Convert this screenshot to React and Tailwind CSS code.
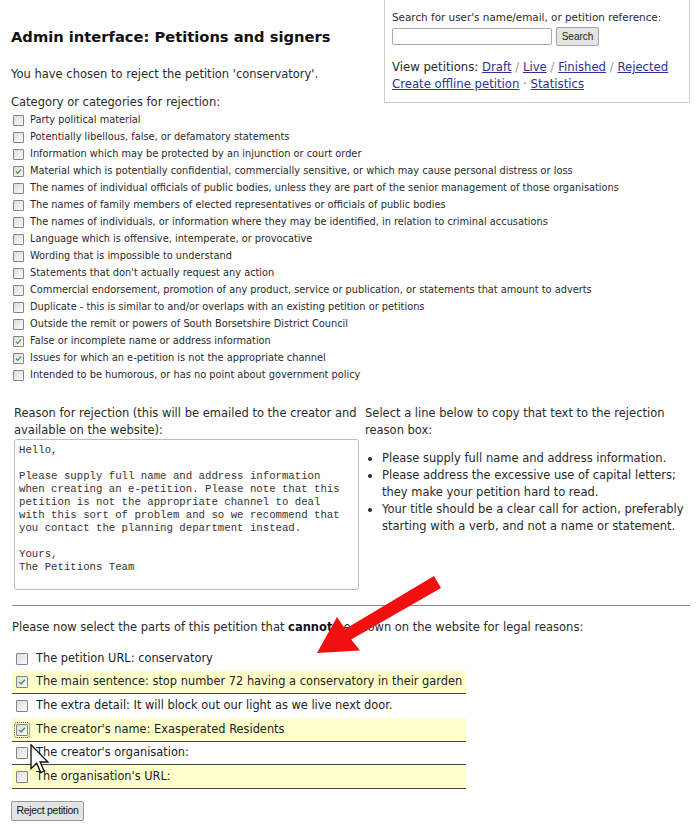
import React from "react";

const Check = () => (
  <svg viewBox="0 0 12 12" className="absolute inset-0 w-full h-full">
    <path d="M2.6 6.2 L4.9 8.4 L9.4 3.2" fill="none" stroke="#3c9a3c" strokeWidth="1.7" />
  </svg>
);

function Box({ checked, size = "small", focus = false }) {
  const sz = size === "small" ? "w-[11px] h-[11px]" : "w-[12px] h-[12px]";
  return (
    <span
      className={`relative inline-block shrink-0 ${sz} border border-[#858585] rounded-[1px] bg-linear-to-br from-[#dcdcdc] to-[#fbfbfb] ${focus ? "outline outline-1 outline-dotted outline-[#444] outline-offset-1" : ""}`}
    >
      {checked && <Check />}
    </span>
  );
}

const categories = [
  ["Party political material", false],
  ["Potentially libellous, false, or defamatory statements", false],
  ["Information which may be protected by an injunction or court order", false],
  ["Material which is potentially confidential, commercially sensitive, or which may cause personal distress or loss", true],
  ["The names of individual officials of public bodies, unless they are part of the senior management of those organisations", false],
  ["The names of family members of elected representatives or officials of public bodies", false],
  ["The names of individuals, or information where they may be identified, in relation to criminal accusations", false],
  ["Language which is offensive, intemperate, or provocative", false],
  ["Wording that is impossible to understand", false],
  ["Statements that don't actually request any action", false],
  ["Commercial endorsement, promotion of any product, service or publication, or statements that amount to adverts", false],
  ["Duplicate - this is similar to and/or overlaps with an existing petition or petitions", false],
  ["Outside the remit or powers of South Borsetshire District Council", false],
  ["False or incomplete name or address information", true],
  ["Issues for which an e-petition is not the appropriate channel", true],
  ["Intended to be humorous, or has no point about government policy", false],
];

const parts = [
  { t: "The petition URL: conservatory", c: false, y: false, b: false, h: "h-[24px]" },
  { t: "The main sentence: stop number 72 having a conservatory in their garden", c: true, y: true, b: true, h: "h-[23px]" },
  { t: "The extra detail: It will block out our light as we live next door.", c: false, y: false, b: false, h: "h-[24px]" },
  { t: "The creator's name: Exasperated Residents", c: true, y: true, b: true, h: "h-[24px]", f: true },
  { t: "The creator's organisation:", c: false, y: false, b: true, h: "h-[23px]" },
  { t: "The organisation's URL:", c: false, y: true, b: true, h: "h-[24px]" },
];

const reasonText = `Hello,

Please supply full name and address information
when creating an e-petition. Please note that this
petition is not the appropriate channel to deal
with this sort of problem and so we recommend that
you contact the planning department instead.

Yours,
The Petitions Team`;

const Link = ({ children }) => <span className="underline text-[#2f3194]">{children}</span>;

export default function App() {
  return (
    <div className="relative w-[698px] h-[831px] overflow-hidden bg-white text-[#2a2a2a] font-['DejaVu_Sans',sans-serif]">
      {/* search box (floated) */}
      <div className="float-right mr-[8px] w-[306px] h-[103px] border border-t-0 border-[#cfcfcf] pl-[7px] pt-[9px] leading-[16px]">
        <div className="whitespace-nowrap text-[10.4px]">Search for user's name/email, or petition reference:</div>
        <div className="flex items-center gap-[4px] mt-[2px]">
          <span className="block w-[160px] h-[17px] border border-[#a9a9a9] rounded-[2px] bg-white" />
          <span className="flex items-center justify-center w-[43px] h-[19px] border border-[#a6a6a6] rounded-[2px] bg-[#e4e4e4] text-[10px] font-['Liberation_Sans',sans-serif] text-[#222]">
            Search
          </span>
        </div>
        <div className="mt-[13px] whitespace-nowrap text-[11.7px] leading-[17px]">
          View petitions: <Link>Draft</Link>
          <span className="text-[#999]"> / </span>
          <Link>Live</Link>
          <span className="text-[#999]"> / </span>
          <Link>Finished</Link>
          <span className="text-[#999]"> / </span>
          <Link>Rejected</Link>
        </div>
        <div className="whitespace-nowrap text-[11.7px] leading-[17px]">
          <Link>Create offline petition</Link>
          <span className="text-[#777]"> · </span>
          <Link>Statistics</Link>
        </div>
      </div>

      <div className="pl-[11px] pt-[27px]">
        <h1 className="text-[14.7px] font-bold leading-[20px] text-[#111]">
          Admin interface: Petitions and signers
        </h1>
        <p className="mt-[19px] text-[11.5px] leading-[16px]">
          You have chosen to reject the petition 'conservatory'.
        </p>
        <p className="mt-[12px] text-[11.5px] leading-[16px]">Category or categories for rejection:</p>
        <div className="flex flex-col mt-[2px]">
          {categories.map(([t, c], i) => (
            <div key={i} className="flex items-center h-[17px] pl-[2px] gap-[6px] text-[9.8px] whitespace-nowrap">
              <Box checked={c} />
              <span>{t}</span>
            </div>
          ))}
        </div>
      </div>

      {/* reason section */}
      <div className="flex mt-[21px] pl-[14px] text-[11.5px] leading-[17px]">
        <div className="w-[351px] shrink-0">
          <div>
            Reason for rejection (this will be emailed to the creator and available on the website):
          </div>
          <div className="w-[345px] h-[151px] border border-[#bdbdbd] rounded-[3px] bg-white pl-[4px] pt-[4px]">
            <pre className="font-['Liberation_Mono',monospace] text-[10.7px] leading-[13px] text-[#333] m-0">
              {reasonText}
            </pre>
          </div>
        </div>
        <div className="flex-1 pr-[6px]">
          <div>Select a line below to copy that text to the rejection reason box:</div>
          <ul className="mt-[11px] pl-[17px] list-disc">
            <li>Please supply full name and address information.</li>
            <li>Please address the excessive use of capital letters; they make your petition hard to read.</li>
            <li>Your title should be a clear call for action, preferably starting with a verb, and not a name or statement.</li>
          </ul>
        </div>
      </div>

      <div className="ml-[12px] mr-[8px] mt-[15px] border-t border-[#8c8c8c]" />

      <p className="pl-[12px] mt-[13px] text-[11.5px] leading-[16px] whitespace-nowrap">
        Please now select the parts of this petition that <b className="text-[#111]">cannot</b> be shown on the website for legal reasons:
      </p>

      <div className="ml-[12px] w-[454px] mt-[12px] flex flex-col text-[11.4px]">
        {parts.map((p, i) => (
          <div
            key={i}
            className={`flex items-center gap-[8px] pl-[4px] whitespace-nowrap ${p.h} ${p.y ? "bg-[#ffffcc]" : ""} ${p.b ? "border-b border-[#444]" : ""}`}
          >
            <Box checked={p.c} size="big" focus={p.f} />
            <span className="text-[#222]">{p.t}</span>
          </div>
        ))}
      </div>

      <div className="ml-[11px] mt-[12px] inline-flex items-center justify-center w-[73px] h-[20px] border border-[#9a9a9a] rounded-[2px] bg-[#e3e3e3] text-[10.5px] font-['Liberation_Sans',sans-serif] tracking-[-0.3px] text-[#111]">
        Reject petition
      </div>

      {/* red arrow overlay */}
      <svg className="absolute left-0 top-0 pointer-events-none" width="698" height="831">
        <polygon
          points="434,576 345.2,629.1 337,617 317,653 360,650.5 351.2,639.5 441,588"
          fill="#f01010"
        />
      </svg>

      {/* mouse cursor overlay */}
      <svg className="absolute left-[30px] top-[744px] pointer-events-none" width="20" height="30" viewBox="0 0 13 20">
        <path
          d="M0.5 0.5 L0.5 16.5 L4.3 12.8 L7 19 L9.2 18 L6.6 12 L11.8 12 Z"
          fill="#fff"
          stroke="#111"
          strokeWidth="0.9"
          strokeLinejoin="miter"
        />
      </svg>
    </div>
  );
}
